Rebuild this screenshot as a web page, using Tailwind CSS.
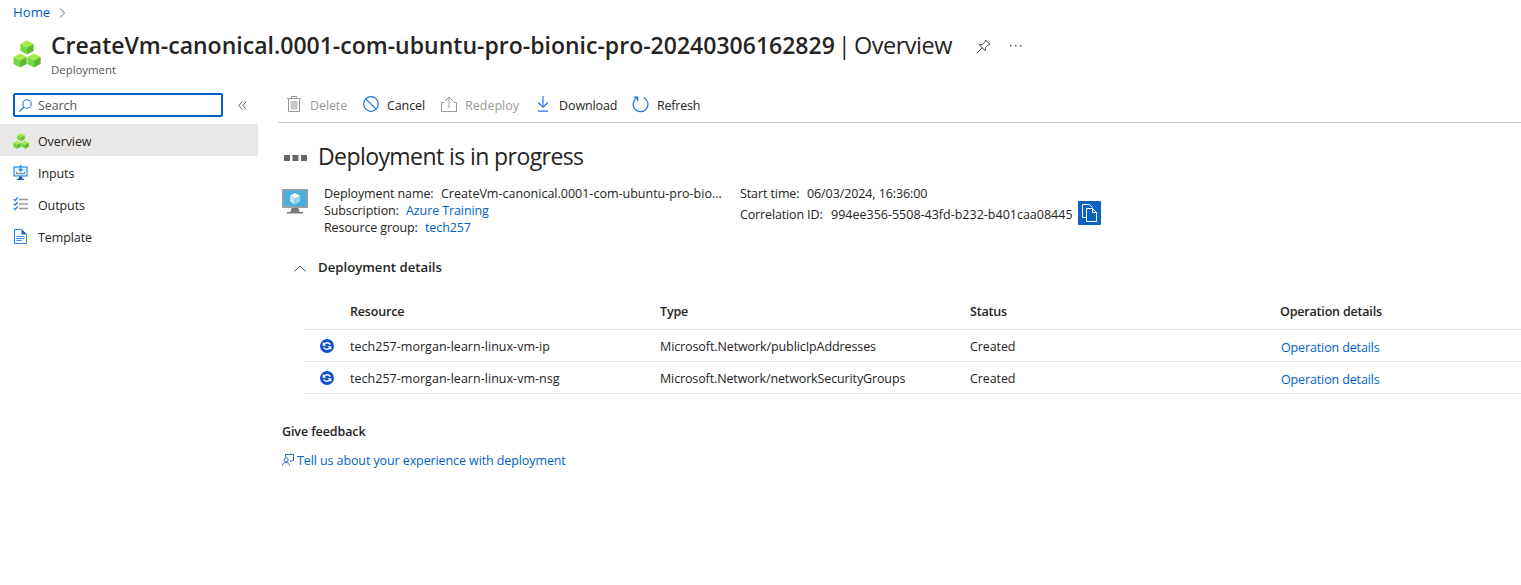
<!DOCTYPE html>
<html lang="en"><head><meta charset="utf-8"><title>Deployment overview</title>
<script src="https://cdn.jsdelivr.net/npm/@tailwindcss/browser@4"></script></head>
<body class="w-[1521px] h-[585px] overflow-hidden bg-white text-[#252423] font-['Open_Sans','Noto_Sans',sans-serif] text-[12.5px] leading-[17px] tracking-[-0.1px] whitespace-nowrap">
<svg class="hidden"><defs>
<symbol id="cubes" viewBox="0 0 28 28"><g id="cube"><path fill="#a4ec48" d="M14 .5 20.6 4 14 7.6 7.4 4z"/><path fill="#76d840" d="M7.4 4 14 7.6v7L7.4 11z"/><path fill="#60b834" d="M20.6 4 14 7.6v7l6.6-3.6z"/></g><use href="#cube" x="-6.9" y="13"/><use href="#cube" x="7" y="13"/></symbol>
<symbol id="sync" viewBox="0 0 14 14"><circle cx="7" cy="7" r="7" fill="#1150d4"/><g fill="none" stroke="#fff" stroke-width="1.4"><path d="M4.2 5.2C5.6 3.2 8.7 3.2 10.4 5.6M9.8 8.8C8.4 10.8 5.3 10.8 3.6 8.4"/></g><path fill="#fff" d="M2.7 3v3.8h3.8zM11.3 11V7.2H7.5z"/></symbol>
</defs></svg>
<header class="h-[93px]">
 <nav class="flex h-[25px] items-center pl-[13px] text-[13.2px] text-[#0062c4]"><span class="w-[38px] tracking-normal">Home</span><svg class="ml-2 mt-px" width="7" height="10" fill="none" stroke="#666"><path d="M1 .5 5.5 5 1 9.5"/></svg></nav>
 <div class="flex pl-[13px]">
  <svg class="mt-[15px]" width="28" height="28"><use href="#cubes"/></svg>
  <div class="ml-[10px] w-[903px]">
   <h1 class="mt-[4px] flex h-8 items-center text-[23px]"><span class="w-[787px] font-semibold tracking-[0.01px]">CreateVm-canonical.0001-com-ubuntu-pro-bionic-pro-20240306162829</span><span class="w-[16px]">|</span><span class="text-[23.5px] tracking-[-0.5px]">Overview</span></h1>
   <p class="text-[11.4px] tracking-normal text-[#555]">Deployment</p>
  </div>
  <svg class="ml-[22px] mt-[14px]" width="15" height="15" fill="none" stroke="#444"><path d="m9.5 1 4.5 4.5-1.8.4-2.7 2.7-.3 3.1-5.9-5.9 3.1-.3L9.1 2.8zM6.2 8.8.8 14.2"/></svg>
  <svg class="ml-[19px] mt-[19px]" width="12" height="3" fill="#555"><path d="M0 1h1.5v1.5H0zM5 1h1.5v1.5H5zM10 1h1.5v1.5H10z"/></svg>
 </div>
</header>
<div class="flex">
<aside class="w-[258px] shrink-0">
 <div class="flex h-[31px] items-start pl-[13px]">
  <div class="flex h-6 w-[210px] items-center rounded-[2px] border-2 border-[#0062c4] pl-1"><svg width="13" height="13" fill="none" stroke="#2b6ed2" stroke-width="1.1"><circle cx="8" cy="5" r="4.2"/><path d="m5 8-4.5 4.5"/></svg><span class="ml-[6px] text-[#555]">Search</span></div>
  <svg class="ml-[15px] mt-[8px]" width="9" height="9" fill="none" stroke="#666"><path d="M4.3.5.8 4.5l3.5 4M8.3.5l-3.5 4 3.5 4"/></svg>
 </div>
 <div class="flex h-8 items-center gap-[9px] bg-[#e9e8e6] pl-[13px] pt-[2px]"><svg width="16" height="16"><use href="#cubes"/></svg><span>Overview</span></div>
 <div class="flex h-8 items-center gap-[9px] pl-[13px] pt-[2px]"><svg width="16" height="16"><path fill="#0078d4" d="M.5 1.5h14v10H.5z"/><path fill="#e7f4ff" d="M1.5 2.5h12v8h-12z"/><path fill="#3393e8" d="M6.7 0h1.8v4.2h2L7.6 7.1 4.7 4.2h2z"/><path stroke="#777" fill="none" d="M3.5 7v1.7h8V7"/><path fill="#1f58a5" d="M6 11.5h3l.6 2.5H11v1H4v-1h1.4z"/></svg><span>Inputs</span></div>
 <div class="flex h-8 items-center gap-[9px] pl-[13px] pt-[2px]"><svg width="16" height="16" class="-mt-0.5" fill="none"><path stroke="#2f7fdc" stroke-width="1.3" d="m.6 3.2 1.6 1.3 2.6-3M.6 7.7 2.2 9l2.6-3M.6 12.2l1.6 1.3 2.6-3"/><path stroke="#999" stroke-width="1.3" d="M6 3.5h9M6 8h9M6 12.5h9"/></svg><span>Outputs</span></div>
 <div class="flex h-8 items-center gap-[9px] pl-[13px] pt-[2px]"><svg width="16" height="16"><path fill="#fff" stroke="#2f86e0" d="M1.5.5h7l5 5v9h-12z"/><path fill="#1a63bd" d="M8.5 0 14 5.5H8.5z"/><path stroke="#2f86e0" d="M3.5 7.5h8M3.5 9.5h8M3.5 11.5h5"/></svg><span>Template</span></div>
</aside>
<main class="ml-5 grow">
 <div class="flex h-[30px] border-b border-[#c8c8c8] pl-[9px]">
  <div class="flex h-6 w-[76px] items-center gap-[9px] text-[#999]"><svg width="14" height="16" class="-mt-0.5" fill="none" stroke="#999"><path d="M0 2.5h14M4.5 2.5v-2h5v2M1.5 2.5v13h11v-13"/><path fill="#c8c8c8" stroke="none" d="M3.5 5h7v8.5h-7z"/></svg><span>Delete</span></div>
  <div class="flex h-6 w-[78px] items-center gap-[8px]"><svg width="16" height="16" class="-mt-0.5" fill="none" stroke="#2373d9" stroke-width="1.2"><circle cx="8" cy="8" r="7.3"/><path d="m2.8 2.8 10.4 10.4"/></svg><span>Cancel</span></div>
  <div class="flex h-6 w-[96px] items-center gap-[8px] text-[#999]"><svg width="16" height="16" class="-mt-0.5" fill="none" stroke="#999"><path d="M3.5 6.5h-3v9h15v-9h-3M8 12V1M4.2 4.8 8 1l3.8 3.8"/></svg><span class="tracking-normal">Redeploy</span></div>
  <div class="flex h-6 w-[95px] items-center gap-[10px]"><svg width="12" height="16" class="-mt-0.5" fill="none" stroke="#2373d9" stroke-width="1.2"><path stroke="#72acf0" stroke-width="1.8" d="M6 0v10"/><path d="m1.3 6.5 4.7 4.7 4.7-4.7M1 15.2h10"/></svg><span>Download</span></div>
  <div class="flex h-6 items-center gap-[8px]"><svg width="17" height="17" class="-mt-0.5" fill="none" stroke="#2373d9" stroke-width="1.2"><path d="M11.8 1.6a7.4 7.4 0 1 1-6.5 0M1.8 1.2h3.9v4"/></svg><span class="tracking-[-0.2px]">Refresh</span></div>
 </div>
 <div class="flex h-[62px] items-center pl-[6px] pt-[3px]"><svg width="23" height="6" fill="#666" class="mt-[5px]"><path d="M0 0h6v6H0zM8.5 0h6v6h-6zM17 0h6v6h-6z"/></svg><h2 class="ml-[11px] text-[23px] leading-7 tracking-[-0.58px]">Deployment is in progress</h2></div>
 <section class="flex h-[67px] pl-1">
  <svg class="mt-[4px]" width="26" height="25"><path fill="#a0a0a0" d="M0 0h26v19H0z"/><path fill="#48b0dc" d="M1.5 1.5h23v16h-23z"/><path fill="#7a7a7a" d="M9.5 19h7l1 4h3.5v1.5H5V23h3.5z"/><path fill="#fff" d="m13 4 5 2.8-5 2.9-5-2.9z"/><path fill="#c9e9f6" d="m8 7.3 4.7 2.7v5.3L8 12.6z"/><path fill="#9bd5ec" d="m18 7.3-4.7 2.7v5.3l4.7-2.7z"/></svg>
  <div class="ml-4 w-[416px]">
   <div class="flex"><span class="w-[117px]">Deployment name:</span><span class="tracking-normal">CreateVm-canonical.0001-com-ubuntu-pro-bio...</span></div>
   <div class="flex"><span class="w-[82px]">Subscription:</span><span class="text-[#0062c4]">Azure Training</span></div>
   <div class="flex"><span class="w-[101px]">Resource group:</span><span class="text-[#0062c4]">tech257</span></div>
  </div>
  <div>
   <div class="flex"><span class="w-[67px]">Start time:</span><span>06/03/2024, 16:36:00</span></div>
   <div class="flex h-6 items-center -mt-px"><span class="mt-[2px] w-[91px] tracking-[-0.14px]">Correlation ID:</span><span class="mt-[2px] w-[247px] tracking-normal">994ee356-5508-43fd-b232-b401caa08445</span><span class="flex h-6 w-[23px] items-center justify-center rounded-[1px] bg-[#0b62c6]"><svg width="16" height="18" fill="none" stroke="#fff"><path d="M4.5 13.5h-4V.5h7l3 3M4.5 4.5h6l4 4v9h-10zM10.5 4.5v4h4"/></svg></span></div>
  </div>
 </section>
 <div class="flex h-[33px] items-center pb-[2px] pl-4"><svg width="12" height="7" class="mt-px" fill="none" stroke="#444"><path d="M.5 6.5 6 1l5.5 5.5"/></svg><h3 class="ml-[12px] text-[13.2px] font-semibold tracking-normal">Deployment details</h3></div>
 <div class="ml-[26px]">
  <div class="grid h-[45px] grid-cols-[46px_310px_310px_310px_1fr] items-center border-b border-[#e1e1e1] pt-[8px] font-semibold tracking-[-0.18px]"><i></i><span>Resource</span><span>Type</span><span>Status</span><span>Operation details</span></div>
  <div class="grid h-8 grid-cols-[46px_310px_310px_310px_1fr] items-center border-b border-[#e8e8e8] pt-px"><svg class="ml-4" width="14" height="14"><use href="#sync"/></svg><span class="tracking-[0.03px]">tech257-morgan-learn-linux-vm-ip</span><span>Microsoft.Network/publicIpAddresses</span><span>Created</span><span class="pl-px pt-[2px] tracking-[-0.13px] text-[#0062c4]">Operation details</span></div>
  <div class="grid h-8 grid-cols-[46px_310px_310px_310px_1fr] items-center border-b border-[#e8e8e8] pt-px"><svg class="ml-4" width="14" height="14"><use href="#sync"/></svg><span class="tracking-[0.03px]">tech257-morgan-learn-linux-vm-nsg</span><span class="tracking-[-0.13px]">Microsoft.Network/networkSecurityGroups</span><span>Created</span><span class="pl-px pt-[2px] tracking-[-0.13px] text-[#0062c4]">Operation details</span></div>
 </div>
 <div class="pl-1 pt-[29px]"><h4 class="font-semibold">Give feedback</h4>
 <div class="mt-3 flex items-center text-[#0062c4]"><svg width="12" height="12" class="-mt-px mr-[3px]" fill="none" stroke="#2962c8"><path d="M3.5 3V.5h8v6H10L8.5 8V6.5M.5 11.5c0-4 7-4 7 0"/><circle cx="4.2" cy="5.8" r="2"/></svg><span>Tell us about your experience with deployment</span></div></div>
</main></div>
</body></html>
